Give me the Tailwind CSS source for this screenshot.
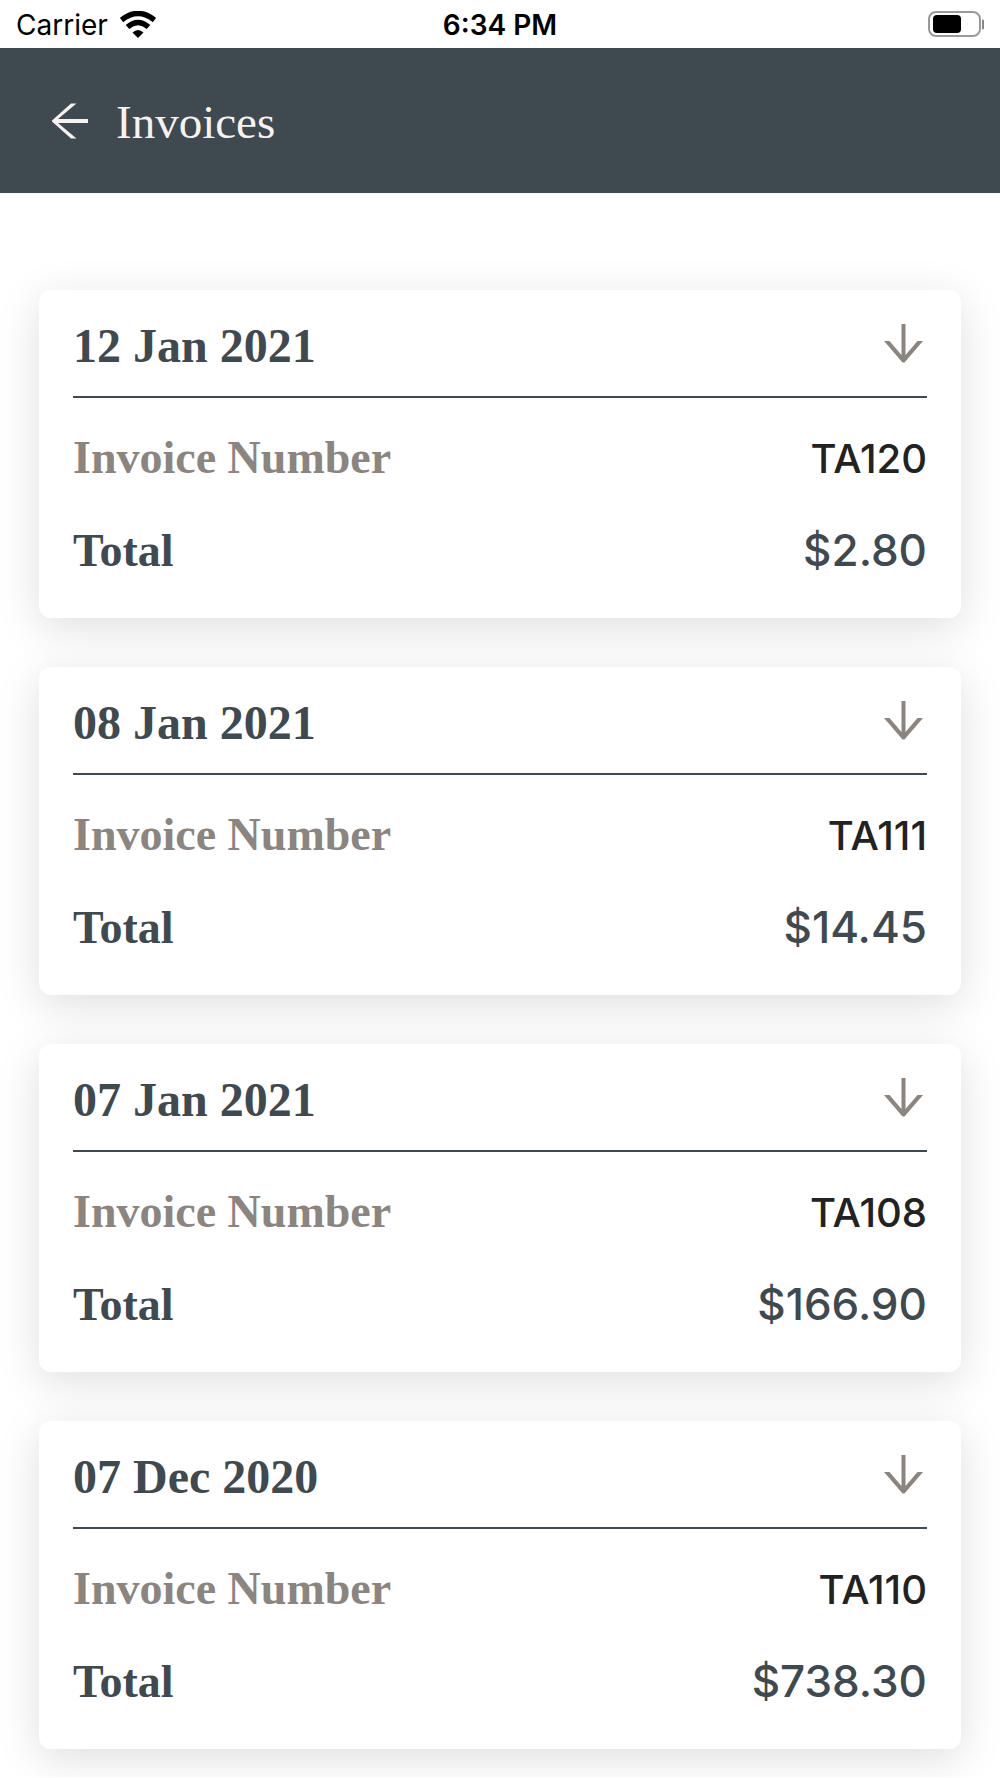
<!DOCTYPE html>
<html lang="en">
<head>
  <meta charset="UTF-8" />
  <meta name="viewport" content="width=device-width, initial-scale=1.0" />
  <title>Invoices</title>
  <script src="https://cdn.jsdelivr.net/npm/@tailwindcss/browser@4"></script>
</head>
<body class="bg-white font-['Inter',sans-serif] text-[#3f4a50]">

<!-- Status bar -->
<div class="grid grid-cols-3 items-center h-12 px-4 pt-[2px] text-[28px] leading-8 text-black">
  <div class="flex items-center gap-3">
    <span>Carrier</span>
    <svg class="w-9 h-7" viewBox="0 0 36 28" fill="none" aria-hidden="true">
      <path d="M1.500 9Q18-4 34.500 9" stroke="#000" stroke-width="5.500" />
      <path d="M7.500 16Q18 7 28.500 16" stroke="#000" stroke-width="5.500" />
      <path d="M12.500 21.500Q18 16.500 23.500 21.500L18 27Z" fill="#000" />
    </svg>
  </div>
  <span class="text-center font-semibold">6:34 PM</span>
  <svg class="justify-self-end w-[57px] h-7" viewBox="0 0 57 28" aria-hidden="true">
    <rect x="2" y="1" width="51" height="24" rx="7" fill="none" stroke="#999" stroke-width="2" />
    <rect x="6" y="4" width="28" height="18" rx="4" fill="#000" />
    <path d="M55 8.500a5 5 0 0 1 0 10z" fill="#888" />
  </svg>
</div>

<!-- Header -->
<header class="flex items-center gap-7 h-[145px] px-[52px] bg-[#3f4a50] text-[#f8f2ee]">
  <button type="button" aria-label="Back" class="cursor-pointer">
    <svg class="w-9 h-9" viewBox="0 0 36 36" fill="currentColor">
      <path d="M19 0.500H24.500L6 16H36V20H6L24.500 35.500H19L0 18.500V17.500Z" />
    </svg>
  </button>
  <h1 class="pt-[2px] text-[47px] leading-[56px] font-['Liberation_Serif',serif]">Invoices</h1>
</header>

<!-- Invoice cards -->
<main id="invoiceList" class="flex flex-col gap-[49px] px-[39px] pt-[97px] pb-7"></main>

<script>
const invoices = [
  { date: "12 Jan 2021", number: "TA120", total: "$2.80" },
  { date: "08 Jan 2021", number: "TA111", total: "$14.45" },
  { date: "07 Jan 2021", number: "TA108", total: "$166.90" },
  { date: "07 Dec 2020", number: "TA110", total: "$738.30" }
];

const invoiceList = document.getElementById('invoiceList');

invoiceList.innerHTML = invoices.map(inv => `
  <article class="rounded-xl bg-white px-[34px] pt-7 pb-[22px] shadow-[0_10px_44px_rgba(0,0,0,0.13)]">
    <div class="flex items-center justify-between pb-[22px] border-b-2 border-[#3f4a50]">
      <h2 class="text-[48px] leading-[56px] font-bold font-['Liberation_Serif',serif]">${inv.date}</h2>
      <button type="button" aria-label="Download invoice ${inv.number}" class="mr-1 pb-[6px] cursor-pointer text-[#8b847f]">
        <svg class="w-[39px] h-[39px]" viewBox="0 0 39 39" fill="currentColor">
          <path d="M17.500 0H21.500V31L33.500 17H39L20.500 38.500H18.500L0 17H5.500L17.500 31Z" />
        </svg>
      </button>
    </div>
    <dl class="pt-[14px] leading-[92px]">
      <div class="flex items-baseline justify-between h-[92px]">
        <dt class="text-[46px] font-bold font-['Liberation_Serif',serif] text-[#8b847f]">Invoice Number</dt>
        <dd class="text-[40px] font-medium text-[#222]">${inv.number}</dd>
      </div>
      <div class="flex items-baseline justify-between h-[92px]">
        <dt class="text-[46px] font-bold font-['Liberation_Serif',serif]">Total</dt>
        <dd class="text-[44px] font-medium">${inv.total}</dd>
      </div>
    </dl>
  </article>
`).join('');
</script>
</body>
</html>
